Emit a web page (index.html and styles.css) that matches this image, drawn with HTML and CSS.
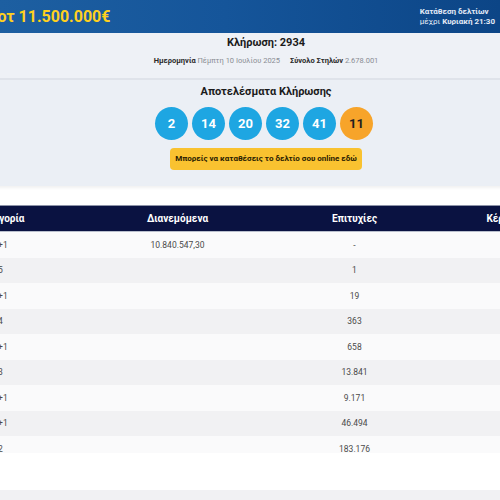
FILE: index.html
```html
<!DOCTYPE html>
<html lang="el">
<head>
<meta charset="utf-8">
<title>Τζόκερ - Κλήρωση 2934</title>
<link rel="stylesheet" href="styles.css">
</head>
<body>
<header class="topbar">
  <div class="jackpot">Τζάκποτ 11.500.000€</div>
  <div class="deadline">
    <span class="dl-line dl-strong">Κατάθεση δελτίων</span>
    <span class="dl-line">μέχρι <b>Κυριακή 21:30</b></span>
  </div>
</header>
<main class="page">
  <section class="draw-info">
    <h1 class="draw-title">Κλήρωση: 2934</h1>
    <p class="draw-meta"><b>Ημερομηνία</b> Πέμπτη 10 Ιουλίου 2025<span class="meta-gap"></span><b>Σύνολο Στηλών</b> 2.678.001</p>
  </section>
  <section class="results">
    <h2 class="results-title">Αποτελέσματα Κλήρωσης</h2>
    <div class="balls">
      <span class="ball">2</span>
      <span class="ball">14</span>
      <span class="ball">20</span>
      <span class="ball">32</span>
      <span class="ball">41</span>
      <span class="ball ball-joker">11</span>
    </div>
    <a class="cta" href="#">Μπορείς να καταθέσεις το δελτίο σου online εδώ</a>
  </section>
  <div class="table-wrap">
    <table class="prizes">
      <thead>
        <tr><th>Κατηγορία</th><th>Διανεμόμενα</th><th>Επιτυχίες</th><th>Κέρδη ανά επιτυχία</th></tr>
      </thead>
      <tbody>
        <tr><td>5+1</td><td>10.840.547,30</td><td>-</td><td>-</td></tr>
        <tr><td>5</td><td></td><td>1</td><td>50.000,00</td></tr>
        <tr><td>4+1</td><td></td><td>19</td><td>2.500,00</td></tr>
        <tr><td>4</td><td></td><td>363</td><td>50,00</td></tr>
        <tr><td>3+1</td><td></td><td>658</td><td>50,00</td></tr>
        <tr><td>3</td><td></td><td>13.841</td><td>2,00</td></tr>
        <tr><td>2+1</td><td></td><td>9.171</td><td>2,00</td></tr>
        <tr><td>1+1</td><td></td><td>46.494</td><td>1,50</td></tr>
        <tr><td>2</td><td></td><td>183.176</td><td>1,50</td></tr>
      </tbody>
    </table>
  </div>
  <div class="next-band"></div>
</main>
</body>
</html>
```

FILE: styles.css
```css
html, body {
  margin: 0;
  padding: 0;
  overflow: hidden;
  background: #ffffff;
  font-family: Roboto, "Noto Sans", "Liberation Sans", sans-serif;
  color: #222;
}

.topbar {
  height: 33px;
  display: flex;
  align-items: center;
  justify-content: space-between;
  background: linear-gradient(90deg, #1d5fa1 0%, #15559a 45%, #0c4586 100%);
  overflow: hidden;
}

.jackpot {
  margin-left: -49px;
  font-size: 16px;
  font-weight: 700;
  color: #ffd01e;
  white-space: nowrap;
}

.deadline {
  display: flex;
  flex-direction: column;
  align-items: flex-start;
  padding-right: 5px;
  font-size: 8px;
  line-height: 10px;
  color: #e3eaf6;
  white-space: nowrap;
}

.dl-strong {
  font-weight: 700;
}

.page {
  width: 708px;
  margin-left: -88px;
}

.draw-info {
  background: #eef1f6;
  padding: 3px 0 12px;
  border-bottom: 2px solid #dfe3ea;
  text-align: center;
}

.draw-title {
  margin: 0;
  font-size: 11px;
  line-height: 13px;
  font-weight: 700;
  color: #1b1b1b;
}

.draw-meta {
  margin: 7px 0 0;
  font-size: 7.5px;
  line-height: 10px;
  color: #8a8d94;
}

.draw-meta b {
  color: #2a2a2a;
}

.meta-gap {
  display: inline-block;
  width: 10px;
}

.results {
  background: #ebeff5;
  padding: 6px 0 16px;
  display: flex;
  flex-direction: column;
  align-items: center;
  box-shadow: 0 2px 3px rgba(0, 0, 0, 0.06);
}

.results-title {
  margin: 0;
  font-size: 11px;
  line-height: 12px;
  font-weight: 700;
  color: #1b1b1b;
}

.balls {
  margin-top: 9px;
  display: flex;
  gap: 4px;
  margin-right: 4px;
}

.ball {
  width: 33px;
  height: 33px;
  border-radius: 50%;
  background: #1ea6e2;
  color: #ffffff;
  font-size: 13px;
  font-weight: 700;
  display: flex;
  align-items: center;
  justify-content: center;
}

.ball-joker {
  background: #f7a42a;
  color: #1f1f1f;
}

.cta {
  margin-top: 8px;
  height: 22px;
  line-height: 22px;
  padding: 0 5px;
  border-radius: 4px;
  background: #f9c230;
  color: #2a2000;
  font-size: 8px;
  font-weight: 700;
  text-decoration: none;
  white-space: nowrap;
}

.table-wrap {
  margin-top: 19px;
  height: 248px;
  overflow: hidden;
}

.prizes {
  width: 708px;
  table-layout: fixed;
  border-collapse: collapse;
}

.prizes th {
  height: 26px;
  padding: 0;
  background: #0a1241;
  color: #ffffff;
  font-size: 10px;
  font-weight: 700;
  border-top: 1px solid #8d93a8;
  border-bottom: 1px solid #b9bfcd;
  box-sizing: border-box;
}

.prizes td {
  height: 25.5px;
  padding: 0;
  text-align: center;
  font-size: 8.5px;
  color: #4a4a4a;
}

.prizes tbody tr:nth-child(odd) {
  background: #fafafb;
}

.prizes tbody tr:nth-child(even) {
  background: #f1f1f3;
}

.next-band {
  margin-top: 37px;
  height: 20px;
  background: #f1f1f3;
}
```
